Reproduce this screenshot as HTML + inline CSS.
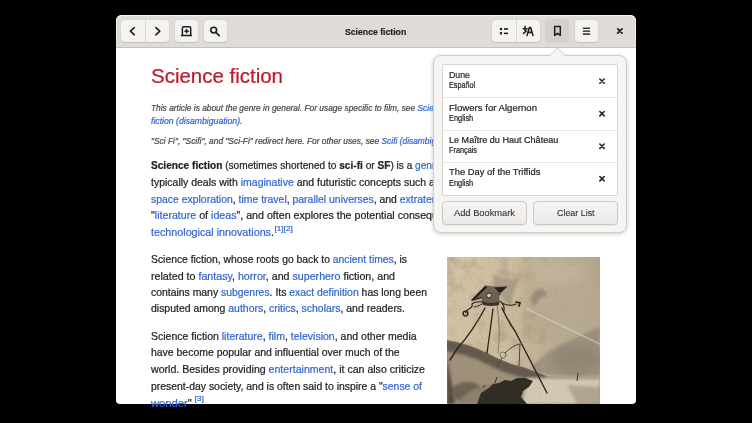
<!DOCTYPE html>
<html><head><meta charset="utf-8">
<style>
*{box-sizing:border-box;margin:0;padding:0}
html,body{width:752px;height:423px;background:#000;overflow:hidden;font-family:"Liberation Sans",sans-serif}
#win{position:absolute;left:116px;top:15px;width:520px;height:389px;background:#fff;border-radius:6px 6px 4px 4px;overflow:hidden}
#hb{position:absolute;left:116px;top:15px;width:520px;height:33px;background:#dfdcd8;border-bottom:1px solid #c6c1bc;border-radius:6px 6px 0 0;box-shadow:inset 0 1px 0 rgba(255,255,255,.8),inset 1px 0 0 rgba(255,255,255,.4),inset -1px 0 0 rgba(255,255,255,.4)}
.btn{position:absolute;top:20px;height:22px;background:#f4f3f2;border-radius:4px;box-shadow:0 1px 0 rgba(0,0,0,0.10), 0 0 0 0.5px rgba(0,0,0,0.06)}
.pressed{background:#d4d0cc;box-shadow:none}
.sep{position:absolute;top:0;width:1px;height:22px;background:#d8d5d2}
.l{position:absolute;white-space:nowrap;-webkit-text-stroke:0.22px currentColor}
a{color:#3266d0;text-decoration:none}
.h1{color:#c0182a}
.note{font-style:italic;color:#46494b}
.p{color:#202224}
sup{font-size:8px;vertical-align:0;position:relative;top:-4.6px;left:0.5px;color:#3266d0}
#pop{position:absolute;left:433px;top:55px;width:194px;height:178px;background:#f6f5f4;border:1px solid #cfcbc7;border-radius:8px;box-shadow:0 1px 4px rgba(0,0,0,0.2)}
#lb{position:absolute;left:442px;top:64px;width:176px;height:132px;background:#fff;border:1px solid #d8d4d0;border-radius:2px}
.sepr{position:absolute;left:443px;width:174px;height:1px;background:#e8e5e2}
.rt,.rs,.bt,.ht{color:#1e2022}
.bt{-webkit-text-stroke:0.08px currentColor;color:#2a2d2f}
.ht{font-weight:bold;color:#1e2022}
.pb{position:absolute;top:201px;height:24px;background:linear-gradient(#f6f5f4,#edebe9);border:1px solid #cdc7c2;border-radius:4px;box-shadow:0 1px 0 rgba(0,0,0,0.06)}
</style></head><body>
<div id="win"></div>
<div class="l h1" id="L0" style="left:151px;top:65.85px;font-size:20.5px;line-height:20.5px;transform:scaleX(0.9986);transform-origin:0 0;"><span>Science fiction</span></div>
<div class="l note" id="L1" style="left:151px;top:103.65px;font-size:8.45px;line-height:8.45px;transform:scaleX(0.9917);transform-origin:0 0;"><span>This article is about the genre in general. For usage specific to film, see </span><a>Science fiction film</a>. For other uses, see <a>Science</a></div>
<div class="l note" id="L2" style="left:151px;top:116.85px;font-size:8.45px;line-height:8.45px;transform:scaleX(1.0266);transform-origin:0 0;"><span><a>fiction (disambiguation)</a>.</span></div>
<div class="l note" id="L3" style="left:151px;top:136.85px;font-size:8.45px;line-height:8.45px;transform:scaleX(0.9944);transform-origin:0 0;"><span>"Sci Fi", "Scifi", and "Sci-Fi" redirect here. For other uses, see </span><a>Scifi (disambiguation)</a>.</div>
<div class="l p" id="L4" style="left:151px;top:160.11px;font-size:10.5px;line-height:10.5px;transform:scaleX(0.9629);transform-origin:0 0;"><span><b>Science fiction</b> (sometimes shortened to <b>sci-fi</b> or <b>SF</b>) is a </span><a>genre</a> of <a>speculative fiction</a> which</div>
<div class="l p" id="L5" style="left:151px;top:176.81px;font-size:10.5px;line-height:10.5px;transform:scaleX(0.9985);transform-origin:0 0;"><span>typically deals with <a>imaginative</a> and futuristic concepts such </span>as advanced <a>science and technology</a>,</div>
<div class="l p" id="L6" style="left:151px;top:193.51px;font-size:10.5px;line-height:10.5px;transform:scaleX(0.9935);transform-origin:0 0;"><span><a>space exploration</a>, <a>time travel</a>, <a>parallel universes</a>, and </span><a>extraterrestrial life</a>. It has been called the</div>
<div class="l p" id="L7" style="left:151px;top:210.11px;font-size:10.5px;line-height:10.5px;transform:scaleX(1.0139);transform-origin:0 0;"><span>"<a>literature</a> of <a>ideas</a>", and often explores the potential </span>consequences of scientific, social, and</div>
<div class="l p" id="L8" style="left:151px;top:226.81px;font-size:10.5px;line-height:10.5px;transform:scaleX(1.0227);transform-origin:0 0;"><span><a>technological innovations</a>.</span><sup>[1][2]</sup></div>
<div class="l p" id="L9" style="left:151px;top:254.11px;font-size:10.5px;line-height:10.5px;transform:scaleX(0.9856);transform-origin:0 0;"><span>Science fiction, whose roots go back to <a>ancient times</a>, is</span></div>
<div class="l p" id="L10" style="left:151px;top:270.61px;font-size:10.5px;line-height:10.5px;transform:scaleX(1.0153);transform-origin:0 0;"><span>related to <a>fantasy</a>, <a>horror</a>, and <a>superhero</a> fiction, and</span></div>
<div class="l p" id="L11" style="left:151px;top:287.11px;font-size:10.5px;line-height:10.5px;transform:scaleX(0.9911);transform-origin:0 0;"><span>contains many <a>subgenres</a>. Its <a>exact definition</a> has long been</span></div>
<div class="l p" id="L12" style="left:151px;top:303.41px;font-size:10.5px;line-height:10.5px;transform:scaleX(0.9957);transform-origin:0 0;"><span>disputed among <a>authors</a>, <a>critics</a>, <a>scholars</a>, and readers.</span></div>
<div class="l p" id="L13" style="left:151px;top:330.71px;font-size:10.5px;line-height:10.5px;transform:scaleX(1.0022);transform-origin:0 0;"><span>Science fiction <a>literature</a>, <a>film</a>, <a>television</a>, and other media</span></div>
<div class="l p" id="L14" style="left:151px;top:347.31px;font-size:10.5px;line-height:10.5px;transform:scaleX(0.9951);transform-origin:0 0;"><span>have become popular and influential over much of the</span></div>
<div class="l p" id="L15" style="left:151px;top:363.91px;font-size:10.5px;line-height:10.5px;transform:scaleX(1.0074);transform-origin:0 0;"><span>world. Besides providing <a>entertainment</a>, it can also criticize</span></div>
<div class="l p" id="L16" style="left:151px;top:380.61px;font-size:10.5px;line-height:10.5px;transform:scaleX(0.9919);transform-origin:0 0;"><span>present-day society, and is often said to inspire a "<a>sense of</a></span></div>
<div class="l p" id="L17" style="left:151px;top:398.11px;font-size:10.5px;line-height:10.5px;transform:scaleX(1.0684);transform-origin:0 0;"><span><a>wonder</a>"</span>.<sup style="left:-0.5px;top:-6px">[3]</sup></div>

<svg id="img" width="153" height="147" viewBox="0 0 153 147" style="position:absolute;left:447px;top:257px">
 <defs>
  <filter id="b2" x="-50%" y="-50%" width="200%" height="200%"><feGaussianBlur stdDeviation="1.5"/></filter>
  <filter id="b3" x="-50%" y="-50%" width="200%" height="200%"><feGaussianBlur stdDeviation="2.5"/></filter>
  <filter id="b4" x="-50%" y="-50%" width="200%" height="200%"><feGaussianBlur stdDeviation="5"/></filter>
  <filter id="b1" x="-50%" y="-50%" width="200%" height="200%"><feGaussianBlur stdDeviation="0.45"/></filter>
  <filter id="nz" x="0" y="0" width="100%" height="100%"><feTurbulence type="fractalNoise" baseFrequency="0.7" numOctaves="2" seed="5"/><feColorMatrix values="0 0 0 0 0.22  0 0 0 0 0.18  0 0 0 0 0.13  0 0 0 -2.2 1.25"/></filter>
  <filter id="nz2" x="0" y="0" width="100%" height="100%"><feTurbulence type="fractalNoise" baseFrequency="0.08" numOctaves="3" seed="9"/><feColorMatrix values="0 0 0 0 0.3  0 0 0 0 0.25  0 0 0 0 0.2  0 0 0 -2.5 1.3"/></filter>
  <linearGradient id="bg" x1="0" y1="0" x2="1" y2="0.3"><stop offset="0" stop-color="#d6c7a5"/><stop offset="0.55" stop-color="#cbbc9c"/><stop offset="1" stop-color="#b9ab92"/></linearGradient>
  <clipPath id="hillc"><path d="M0 83 Q20 86 40 96 Q58 106 76 110 L100 119 L153 122 L153 147 L0 147 Z"/></clipPath>
 </defs>
 <rect width="153" height="147" fill="url(#bg)"/>
 <rect width="153" height="147" filter="url(#nz2)" opacity="0.45"/>
 <g filter="url(#b4)"><rect x="75" y="0" width="85" height="85" fill="#a89b85" opacity="0.35"/><rect x="0" y="95" width="40" height="52" fill="#8d806b" opacity="0.3"/></g>
 <g filter="url(#b4)">
  <ellipse cx="125" cy="50" rx="32" ry="40" fill="#b9ab93" opacity="0.85"/><ellipse cx="110" cy="15" rx="30" ry="12" fill="#c6b89e" opacity="0.8"/>
  <ellipse cx="130" cy="102" rx="24" ry="13" fill="#7f7464"/>
  <ellipse cx="16" cy="62" rx="14" ry="24" fill="#d0c2a6"/>
  <ellipse cx="60" cy="100" rx="10" ry="8" fill="#cfc3aa"/>
 </g>
 <g filter="url(#b2)">
  <path d="M46 17 Q56 23 72 22 Q66 36 64 50 Q56 42 48 34 Z" fill="#a29583" opacity="0.8"/>
  <path d="M84 40 Q88 31 95 32 Q101 34 99 40 Q94 39 91 44 L86 50 Z" fill="#978b7b"/>
  <path d="M84 110 Q100 92 153 70 L153 118 Q120 120 90 116 Z" fill="#978b79" opacity="0.8"/>
 </g>
 <g clip-path="url(#hillc)">
  <rect x="0" y="80" width="153" height="67" fill="#9f917a"/>
  <g filter="url(#b2)">
   <path d="M-5 88 Q20 91 40 101 Q58 111 76 115 L98 123" fill="none" stroke="#64594b" stroke-width="11"/>
   <path d="M0 100 L8 147 L0 147 Z" fill="#4f463b"/><ellipse cx="20" cy="135" rx="16" ry="10" fill="#6e6252"/>
   <path d="M10 147 Q20 132 40 128 L75 124 L100 126 L100 147 Z" fill="#8d806c"/>
   <path d="M80 121 L153 122 L153 147 L75 147 Z" fill="#d4cab5"/>
   <path d="M120 128 L153 130 L153 147 L130 147 Z" fill="#b3a793"/>
  </g>
  <path d="M30 147 L34 136 L42 131 L46 127 L52 126 L58 123 L64 124 L70 121 L78 121 L86 124 L82 130 L76 134 L74 140 L80 147 Z" fill="#2f2924" filter="url(#b1)"/>
 </g>
 <rect width="153" height="147" filter="url(#nz)" opacity="0.2"/>
 <g filter="url(#b1)" fill="none" stroke="#2a241f" stroke-linecap="round">
  <path d="M80 52 L153 87" stroke="#d2d5d0" stroke-width="1.4" opacity="0.55"/>
  <path d="M38 51 Q26 74 10 92 L3 103" stroke-width="1.4"/>
  <path d="M46 52 Q43 75 40 96" stroke-width="1.3"/>
  <path d="M55 51 Q62 66 68 74 L100 136" stroke-width="1.4"/>
  <path d="M50 48 Q54 75 51 96" stroke="#7f7465" stroke-width="0.9"/>
  <circle cx="56" cy="98" r="3" fill="#c9bfae" stroke="#6d6354" stroke-width="0.8"/><path d="M58 96 Q66 88 73 87 L72 109 M55 101 L50 110" stroke="#4d4439" stroke-width="1"/>
  <path d="M37 45 Q28 44 25 47 Q26 50 22 52 Q18 54 19 56" stroke-width="1.2"/>
  <circle cx="18.5" cy="56.5" r="2.4" stroke-width="1.4"/><path d="M37 46 Q30 50 27 50" stroke-width="0.9"/>
  <path d="M53 44 Q58 48 57 54 M55 46 Q62 50 69 47" stroke-width="1.1"/>
  <path d="M69 45 L73 46 L72 49" stroke-width="1.8"/>
 </g>
 <g filter="url(#b1)">
    <path d="M24 43 L38.4 28.4 Q50 30 60.5 29.6 L53 36.5 Q40 38 24 43 Z" fill="#6f6557"/>
  <path d="M24 43.5 L38.4 28.4 L40 30.5 L27 43 Z" fill="#231e1a"/>
  <path d="M47 30.5 Q54 30 60.5 29.6 L53 36.5 Q50 33 47 30.5 Z" fill="#2a241f"/>
  <path d="M24 43.5 Q40 37 53 36.5 L53.5 38 Q40 39 25 44 Z" fill="#2a241f"/>
  <path d="M35 37 Q44 33 52 36 L52.5 44 Q44 47 35 44 Z" fill="#6a5f51"/>
  <circle cx="42" cy="38.5" r="2.4" fill="#d8ceb8" stroke="#2f2924" stroke-width="1"/>
  <path d="M35 44 Q44 47 52.5 44 L52 48 Q44 50 36 48 Z" fill="#3a322b"/>
  <path d="M36 131 L38 128 M48 126 L50 120 M130 124 L131 116" stroke="#3a332c" stroke-width="1"/>
 </g>
</svg>
<div id="hb"></div>
<div class="btn" style="left:121px;width:48px"><div class="sep" style="left:24px"></div></div>
<div class="btn" style="left:175px;width:23px"></div>
<div class="btn" style="left:204px;width:23px"></div>
<div class="l ht" id="L18" style="left:344.8px;top:27.83px;font-size:9.3px;line-height:9.3px;transform:scaleX(0.9326);transform-origin:0 0;"><span>Science fiction</span></div>

<div class="btn" style="left:492px;width:48px"><div class="sep" style="left:24px"></div></div>
<div class="btn pressed" style="left:545px;width:24px;top:19px;height:24px"></div>
<div class="btn" style="left:575px;width:23px"></div>

<svg width="752" height="423" style="position:absolute;left:0;top:0" fill="none" stroke="#1c1f21" stroke-linecap="round" stroke-linejoin="round">
 <path d="M134.3 27.6 L130.4 31.2 L134.3 34.8" stroke-width="1.6"/>
 <path d="M155.9 27.6 L159.8 31.2 L155.9 34.8" stroke-width="1.6"/>
 <path d="M181.6 35.5 H191.2" stroke-width="1.6"/>
 <path d="M182.4 35.5 V28 Q182.4 26.8 183.6 26.8 H189.5 Q190.7 26.8 190.7 28 V35.5" stroke-width="1.5"/>
 <path d="M186.6 29.6 V32.8 M185 31.2 H188.2" stroke-width="1.6"/>
 <circle cx="213.7" cy="30.1" r="2.9" stroke-width="1.6"/>
 <path d="M215.9 32.4 L219.2 35.6" stroke-width="1.7"/>
 <path d="M554.7 26.4 H560.3 V35.4 L557.5 33.3 L554.7 35.4 Z" stroke-width="1.5"/>
 <path d="M617.7 28.8 L622.1 33.2 M622.1 28.8 L617.7 33.2" stroke-width="1.7"/>
 <path d="M527.1 35.4 L529.3 27.5 H530.6 L532.9 35.4 M528.1 32.4 H531.9" stroke-width="1.6"/>
 <path d="M525.1 26.3 V30.6 M523.2 28.7 H527.1 M526.2 31.1 L523.5 33.4" stroke-width="1.5"/>
</svg>
<svg width="752" height="423" style="position:absolute;left:0;top:0" fill="#1c1f21">
 <rect x="499.9" y="28" width="2.2" height="2.1"/>
 <rect x="499.9" y="32.1" width="2.2" height="2.3"/>
 <rect x="504" y="28.2" width="4" height="1.6"/>
 <rect x="504" y="32.6" width="4" height="1.5"/>
 <rect x="582.9" y="27.6" width="7.2" height="1.3"/>
 <rect x="582.9" y="30.5" width="7.2" height="1.3"/>
 <rect x="582.9" y="33.4" width="7.2" height="1.4"/>
</svg>

<div id="pop"></div>
<svg width="752" height="423" style="position:absolute;left:0;top:0">
 <path d="M550 55.5 L557.5 48 L565 55.5" fill="#f6f5f4" stroke="#cfcbc7" stroke-width="1"/>
 <rect x="550.5" y="55" width="14" height="2" fill="#f6f5f4"/>
</svg>
<div id="lb"></div>
<div class="sepr" style="top:97px"></div>
<div class="sepr" style="top:130px"></div>
<div class="sepr" style="top:162px"></div>
<div class="pb" style="left:442px;width:85px"></div>
<div class="pb" style="left:533px;width:85px"></div>
<div class="l rt" id="L19" style="left:449px;top:69.62px;font-size:9.9px;line-height:9.9px;transform:scaleX(0.8895);transform-origin:0 0;"><span>Dune</span></div>
<div class="l rs" id="L20" style="left:449px;top:80.77px;font-size:8.3px;line-height:8.3px;transform:scaleX(0.8671);transform-origin:0 0;"><span>Español</span></div>
<div class="l rt" id="L21" style="left:449px;top:102.52px;font-size:9.9px;line-height:9.9px;transform:scaleX(0.9717);transform-origin:0 0;"><span>Flowers for Algernon</span></div>
<div class="l rs" id="L22" style="left:449px;top:113.67px;font-size:8.3px;line-height:8.3px;transform:scaleX(0.8891);transform-origin:0 0;"><span>English</span></div>
<div class="l rt" id="L23" style="left:449px;top:135.02px;font-size:9.9px;line-height:9.9px;transform:scaleX(0.9175);transform-origin:0 0;"><span>Le Maître du Haut Château</span></div>
<div class="l rs" id="L24" style="left:449px;top:146.17px;font-size:8.3px;line-height:8.3px;transform:scaleX(0.8797);transform-origin:0 0;"><span>Français</span></div>
<div class="l rt" id="L25" style="left:449px;top:167.42px;font-size:9.9px;line-height:9.9px;transform:scaleX(0.9479);transform-origin:0 0;"><span>The Day of the Triffids</span></div>
<div class="l rs" id="L26" style="left:449px;top:178.57px;font-size:8.3px;line-height:8.3px;transform:scaleX(0.8891);transform-origin:0 0;"><span>English</span></div>
<div class="l bt" id="L27" style="left:454px;top:208.51px;font-size:9.2px;line-height:9.2px;transform:scaleX(1.0122);transform-origin:0 0;"><span>Add Bookmark</span></div>
<div class="l bt" id="L28" style="left:556.5px;top:208.71px;font-size:9.2px;line-height:9.2px;transform:scaleX(0.9688);transform-origin:0 0;"><span>Clear List</span></div>

<svg width="752" height="423" style="position:absolute;left:0;top:0" fill="none" stroke="#232729" stroke-width="1.6" stroke-linecap="round"><path d="M599.85 78.94999999999999 L604.15 83.25 M604.15 78.94999999999999 L599.85 83.25"/><path d="M599.85 111.55 L604.15 115.85000000000001 M604.15 111.55 L599.85 115.85000000000001"/><path d="M599.85 144.04999999999998 L604.15 148.35 M604.15 144.04999999999998 L599.85 148.35"/><path d="M599.85 176.54999999999998 L604.15 180.85 M604.15 176.54999999999998 L599.85 180.85"/></svg>
</body></html>
